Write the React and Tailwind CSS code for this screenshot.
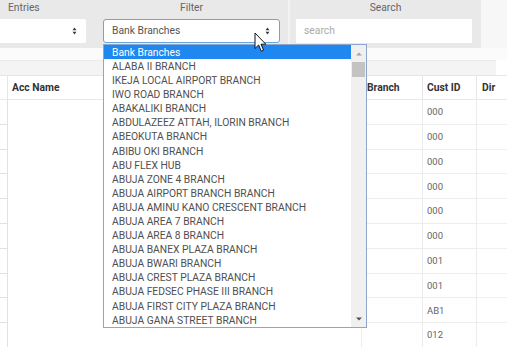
import React from "react";

const branches = [
  "ALABA II BRANCH",
  "IKEJA LOCAL AIRPORT BRANCH",
  "IWO ROAD BRANCH",
  "ABAKALIKI BRANCH",
  "ABDULAZEEZ ATTAH, ILORIN BRANCH",
  "ABEOKUTA BRANCH",
  "ABIBU OKI BRANCH",
  "ABU FLEX HUB",
  "ABUJA ZONE 4 BRANCH",
  "ABUJA AIRPORT BRANCH BRANCH",
  "ABUJA AMINU KANO CRESCENT BRANCH",
  "ABUJA AREA 7 BRANCH",
  "ABUJA AREA 8 BRANCH",
  "ABUJA BANEX PLAZA BRANCH",
  "ABUJA BWARI BRANCH",
  "ABUJA CREST PLAZA BRANCH",
  "ABUJA FEDSEC PHASE III BRANCH",
  "ABUJA FIRST CITY PLAZA BRANCH",
  "ABUJA GANA STREET BRANCH",
];

const custIds = ["000", "000", "000", "000", "000", "000", "001", "001", "AB1", "012"];

function UpDown() {
  return (
    <svg width="5" height="8" viewBox="0 0 5 8" className="shrink-0">
      <path d="M0.5 3.3 L2.5 0.6 L4.5 3.3 Z" fill="#3a3a3a" />
      <path d="M0.5 4.7 L2.5 7.4 L4.5 4.7 Z" fill="#3a3a3a" />
    </svg>
  );
}

function Cursor() {
  return (
    <svg width="13" height="21" viewBox="0 0 13 21" className="absolute left-[254px] top-[32px] z-30">
      <path
        d="M1 1 L1 16.5 L4.6 13 L7.3 19.2 L9.6 18.2 L7 12.2 L11.8 12.2 Z"
        fill="#ffffff"
        stroke="#111"
        strokeWidth="1"
        strokeLinejoin="round"
      />
    </svg>
  );
}

export default function App() {
  return (
    <div className="relative w-[507px] h-[347px] overflow-hidden bg-white font-['Roboto',sans-serif] text-[10.3px]">
      {/* toolbar */}
      <div className="flex h-[48px]">
        <div className="w-[95px] bg-[#e9e9e9] flex flex-col">
          <div className="h-[19px] pl-[8px] pt-[2px] leading-[12px] text-[#666]">Entries</div>
          <div className="w-[86px] h-[24px] bg-white rounded-r-[2px] flex items-center justify-end pr-[9px]">
            <UpDown />
          </div>
        </div>
        <div className="relative w-[193px] bg-[#e9e9e9] flex flex-col px-[8px]">
          <div className="h-[19px] pt-[2px] leading-[12px] text-center text-[#666]">Filter</div>
          <div className="h-[24px] bg-white border border-[#6aa6dc] rounded-[3px] flex items-center justify-between pl-[8px] pr-[9px] text-[#555]">
            <span>Bank Branches</span>
            <UpDown />
          </div>
          {/* dropdown */}
          <div className="absolute left-[8px] top-[44px] z-20 w-[264px] h-[284px] bg-white border border-[#8ea5cd] flex">
            <div className="flex-1 flex flex-col">
              <div className="h-[14.15px] bg-[#1e88f0] text-white pl-[8px] pt-[2px] flex items-center leading-none">
                Bank Branches
              </div>
              {branches.map((b) => (
                <div key={b} className="h-[14.15px] pl-[8px] pt-[2px] flex items-center leading-none text-[#505050] whitespace-nowrap">
                  {b}
                </div>
              ))}
            </div>
            <div className="w-[15px] bg-[#f0f0f0] flex flex-col">
              <div className="h-[17px] flex items-center justify-center pt-[1px]">
                <svg width="6" height="4" viewBox="0 0 6 4">
                  <path d="M0 3.6 L3 0.4 L6 3.6 Z" fill="#a3a3a3" />
                </svg>
              </div>
              <div className="h-[15px] mx-[1px] bg-[#c3c3c3]" />
              <div className="flex-1" />
              <div className="h-[16px] flex items-center justify-center pb-[1px]">
                <svg width="6" height="4" viewBox="0 0 6 4">
                  <path d="M0 0.4 L3 3.6 L6 0.4 Z" fill="#505050" />
                </svg>
              </div>
            </div>
          </div>
        </div>
        <div className="w-[2px] bg-[#f3f3f3]" />
        <div className="w-[191px] bg-[#e9e9e9] flex flex-col pl-[6px]">
          <div className="h-[19px] pt-[2px] leading-[12px] text-center text-[#666] pr-[6px]">Search</div>
          <div className="w-[176px] h-[24px] bg-white flex items-center pl-[8px] text-[#aaa]">search</div>
        </div>
        <div className="flex-1 bg-[#f7f7f7]" />
      </div>
      <div className="h-[12px] bg-[#fbfbfb]" />
      <div className="h-[15px] w-[496px] bg-[#f4f4f4] border-t border-[#ececec]" />

      {/* table */}
      <div className="flex flex-col border-t border-[#e6e6e6]">
        <div className="flex h-[24px] border-b border-[#e8e8e8] font-bold text-[#333]">
          <div className="w-[8px] border-r border-[#e6e6e6]" />
          <div className="w-[354px] border-r border-[#eeeeee] pl-[4px] flex items-center">Acc Name</div>
          <div className="w-[61px] border-r border-[#e6e6e6] pl-[5px] flex items-center">Branch</div>
          <div className="w-[54px] border-r border-[#e6e6e6] pl-[4px] flex items-center">Cust ID</div>
          <div className="flex-1 pl-[5px] flex items-center">Dir</div>
        </div>
        {custIds.map((c, i) => (
          <div key={i} className="flex h-[24.8px]">
            <div className="w-[8px] border-r border-b border-[#e2e2e2]" />
            <div className="w-[354px] border-r border-[#eeeeee]" />
            <div className="w-[61px] border-r border-b border-[#ececec]" />
            <div className="w-[54px] border-r border-b border-[#ececec] pl-[4px] pt-[1px] flex items-center text-[9.5px] text-[#666]">
              {c}
            </div>
            <div className="flex-1 border-b border-[#f0f0f0]" />
          </div>
        ))}
      </div>

      <Cursor />
    </div>
  );
}
